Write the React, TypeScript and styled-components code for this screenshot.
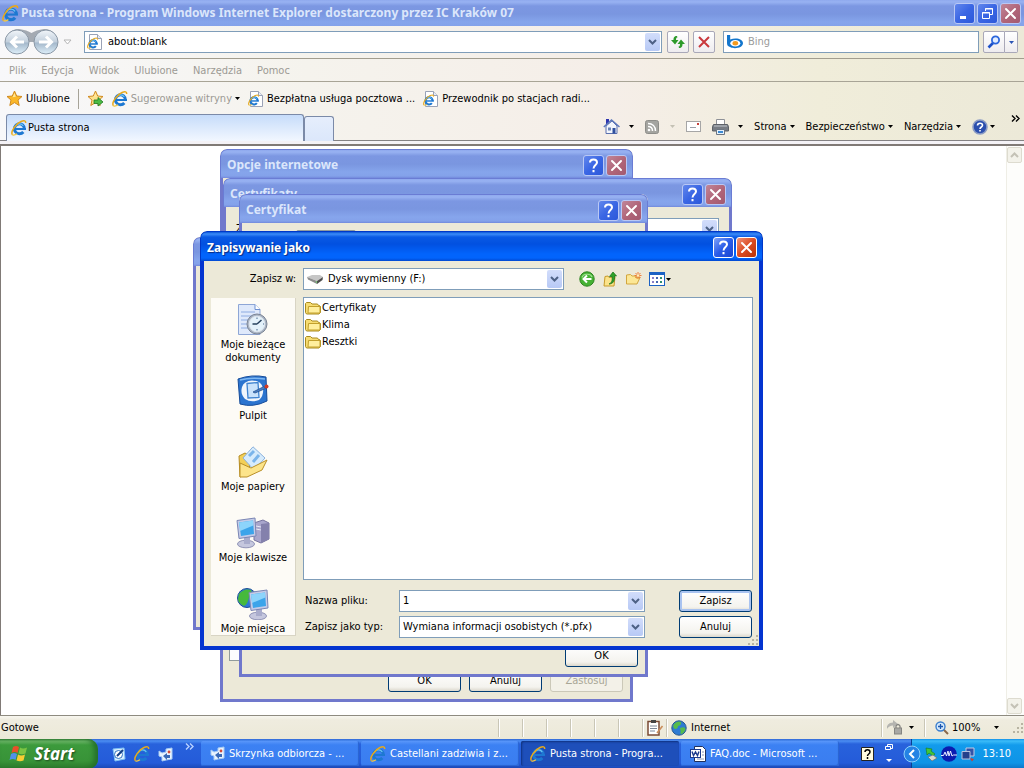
import React from "react";
import styled, { createGlobalStyle, css } from "styled-components";

const ui = `"DejaVu Sans Condensed", "DejaVu Sans", "Liberation Sans", sans-serif`;
const caption = `"Noto Sans", "Open Sans", sans-serif`;

const GlobalStyle = createGlobalStyle`
  * { box-sizing: border-box; }
  body { margin: 0; background: #fff; }
  button, input, select { font: inherit; color: inherit; margin: 0; }
  svg { display: block; flex: none; }
`;

const Screen = styled.div`
  min-height: 100vh;
  display: flex;
  flex-direction: column;
  font: 11px/14px ${ui};
  color: #000;
  overflow: hidden;
`;

const PlainButton = styled.button`
  border: 0;
  padding: 0;
  background: none;
  display: flex;
  align-items: center;
  white-space: nowrap;
`;

/* ---------- window captions ---------- */

const inactiveCaption = `linear-gradient(#8fa9ee 0, #98b2f2 2px, #7c97e2 6px, #7a96e0 14px, #86a5ec 22px, #84a2ea 26px, #7289dc 100%)`;
const activeCaption = `linear-gradient(#0a56d8 0, #3c8cf8 2px, #0a5ae4 5px, #0250e0 12px, #0264fc 22px, #0264fc 26px, #0148d0 100%)`;

const MainCaption = styled.header`
  height: 26px;
  display: flex;
  align-items: center;
  gap: 2px;
  padding: 0 3px 0 2px;
  background: ${inactiveCaption};
`;

const CaptionText = styled.h1<{ $active?: boolean }>`
  flex: 1;
  min-width: 0;
  margin: 0;
  font: bold 12px/16px ${caption};
  color: ${(p) => (p.$active ? "#fff" : "#dbe6fb")};
  text-shadow: ${(p) => (p.$active ? "1px 1px 1px #0a2a80" : "none")};
  white-space: nowrap;
  overflow: hidden;
`;

const CaptionButtons = styled.div`
  display: flex;
  gap: 2px;
`;

const CaptionButton = styled.button<{ $kind: "blue" | "close"; $active?: boolean }>`
  width: 21px;
  height: 21px;
  padding: 0;
  display: flex;
  align-items: center;
  justify-content: center;
  border-radius: 3px;
  border: 1px solid ${(p) => (p.$active ? "#fff" : "#b9c8f5")};
  background: ${(p) =>
    p.$kind === "close"
      ? p.$active
        ? "linear-gradient(135deg, #f0937a, #dc4c22 50%, #b83208)"
        : "linear-gradient(135deg, #c08698, #b06478 55%, #a25a70)"
      : p.$active
        ? "linear-gradient(135deg, #7fa2f8, #2a5ce8 50%, #1a44d0)"
        : "linear-gradient(135deg, #6287ec, #3a66e4 50%, #2c58da)"};
`;

const CloseGlyph = () => (
  <svg width="15" height="15" viewBox="0 0 15 15" stroke="#fff" strokeWidth="2" strokeLinecap="round">
    <path d="M3 3l9 9M12 3l-9 9" />
  </svg>
);
const HelpGlyph = () => (
  <svg width="15" height="17" viewBox="0 0 15 17" fill="none" stroke="#fff" strokeWidth="2">
    <path d="M4 5.500C4 1.500 11 1.500 11 5.500C11 8 7.500 8 7.500 11.500" />
    <path d="M7.500 13v2.200" />
  </svg>
);

/* ---------- icons ---------- */

const IeMark = () => (
  <>
    <path d="M13.400 9.200A5 5 0 1 0 12.300 12" fill="none" stroke="#1d78d2" strokeWidth="3" />
    <path d="M4 9h11" stroke="#1d78d2" strokeWidth="2" />
    <path d="M4.200 7C5.500 3.200 10.500 3 12.300 6" fill="none" stroke="#6cc4f4" strokeWidth="1.200" />
    <path d="M1.500 14.800C-1 12 5 3.500 10 1.500C13 0.300 15 0.600 14.600 3" fill="none" stroke="#e8a91c" strokeWidth="1.500" />
    <path d="M1.500 14.800C3 15.500 5 14.500 6 13.800" fill="none" stroke="#f5c842" strokeWidth="1.300" />
  </>
);
const IeIcon = ({ size = 16 }: { size?: number }) => (
  <svg width={size} height={size} viewBox="0 0 16 16">
    <IeMark />
  </svg>
);
const IePageIcon = () => (
  <svg width="16" height="16" viewBox="0 0 16 16">
    <path d="M2.500 .5h8l4 4v11h-12z" fill="#fff" stroke="#9aa2b6" />
    <path d="M10.500 .5v4h4" fill="#e8ecf6" stroke="#9aa2b6" />
    <g transform="translate(0 3.500) scale(.72)">
      <IeMark />
    </g>
  </svg>
);
const NavCircles = () => (
  <svg width="60" height="28" viewBox="0 0 60 28">
    <defs>
      <linearGradient id="navFill" x1="0" y1="0" x2="0" y2="1">
        <stop offset="0" stopColor="#f2f6fa" />
        <stop offset=".48" stopColor="#c3d0dd" />
        <stop offset=".55" stopColor="#a5b9cc" />
        <stop offset="1" stopColor="#dff0fa" />
      </linearGradient>
    </defs>
    <path d="M5 6Q9 1 16 1Q24 2 28.500 5Q33 2 41 1Q48 1 52 6V14H5z" fill="#a4aab2" />
    <circle cx="14" cy="14" r="12" fill="url(#navFill)" stroke="#8b98a6" />
    <circle cx="43" cy="14" r="12" fill="url(#navFill)" stroke="#8b98a6" />
    <path d="M21 14H9M14 8.500L8.500 14L14 19.500M36 14h12M43 8.500L48.500 14L43 19.500" fill="none" stroke="#fff" strokeWidth="3" />
  </svg>
);
const SmallArrow = ({ color = "#000" }: { color?: string }) => (
  <svg width="5" height="3" viewBox="0 0 5 3">
    <path d="M0 0h5L2.500 3z" fill={color} />
  </svg>
);
const OutlineArrow = () => (
  <svg width="9" height="7" viewBox="0 0 9 7">
    <path d="M1 1h7L4.500 5z" fill="#fff" stroke="#b5b5b5" />
  </svg>
);
const RefreshIcon = () => (
  <svg width="16" height="16" viewBox="0 0 16 16" fill="#2c9a2a">
    <path d="M7 2C4 2 3.500 4 3.500 6H1l4 4.500L8.500 6H6C6 4 6.500 3.500 7.500 3.500z" />
    <path d="M9 14c3 0 3.500-2 3.500-4H15l-4-4.500L7.500 10H10c0 2-.5 2.500-1.500 2.500z" />
  </svg>
);
const StopIcon = () => (
  <svg width="16" height="16" viewBox="0 0 16 16" stroke="#c9383c" strokeWidth="2">
    <path d="M3 3l10 10M13 3L3 13" />
  </svg>
);
const BingIcon = () => (
  <svg width="17" height="16" viewBox="0 0 17 16">
    <path d="M1 1h3.200v4.500C10 3 17 5 17 9.300 17 14 8 15.500 4 13 1.500 12.300 1 11 1 9z" fill="#1376cc" />
    <ellipse cx="9.300" cy="9.300" rx="5" ry="3.200" fill="#fff" />
    <ellipse cx="9.300" cy="9.300" rx="2.800" ry="2.200" fill="#f39a1d" />
  </svg>
);
const SearchIcon = () => (
  <svg width="14" height="14" viewBox="0 0 14 14" fill="none">
    <path d="M6 8L1.500 12.500" stroke="#1c50c8" strokeWidth="2.600" />
    <circle cx="8.500" cy="5" r="3.600" fill="#e2edff" stroke="#2b66dc" strokeWidth="1.800" />
  </svg>
);
const StarIcon = ({ arrow }: { arrow?: boolean }) => (
  <svg width="17" height="17" viewBox="0 0 17 17">
    <path d="M8.500 1l2.200 5 5.300.500-4 3.600 1.200 5.400-4.700-2.900-4.700 2.900L5 10.100 1 6.500 6.300 6z" fill={arrow ? "#fde08a" : "#fbb829"} stroke="#d08a20" />
    <path d="M8.500 3l1.300 3.800-3.300.4z" fill="#ffe79a" />
    {arrow && <path d="M7 10h4V7.500L16 12l-5 4v-2.500H7z" fill="#4cbb45" stroke="#207a22" strokeWidth=".8" />}
  </svg>
);
const HomeIcon = () => (
  <svg width="17" height="17" viewBox="0 0 17 17">
    <path d="M3 1h3v5H3z" fill="#2f35ae" />
    <path d="M3 8l6-5 5 5v7.500H3z" fill="#f2f5fc" stroke="#5a6fae" />
    <path d="M.8 9L8.500 2l8 7" fill="none" stroke="#5d78bb" strokeWidth="1.500" />
    <path d="M9.500 10h3v5.500h-3z" fill="#2f4f9e" />
    <path d="M5 9.500h3v3H5z" fill="#6d84b8" />
  </svg>
);
const RssIcon = () => (
  <svg width="14" height="14" viewBox="0 0 14 14" fill="none" stroke="#fff" strokeWidth="1.500">
    <rect x=".5" y=".5" width="13" height="13" rx="2" fill="#a4a4a0" stroke="#8d8d89" strokeWidth="1" />
    <path d="M3 3.500c4.500 0 7.500 3 7.500 7.500M3 6.500C6 6.500 7.500 8 7.500 11" />
    <circle cx="4" cy="10" r=".6" />
  </svg>
);
const MailIcon = () => (
  <svg width="15" height="11" viewBox="0 0 15 11" fill="none">
    <rect x=".5" y=".5" width="14" height="10" fill="#fff" stroke="#a6a6a6" />
    <path d="M4 6.500h6" stroke="#9aa0aa" />
    <path d="M11 2h2v2h-2z" fill="#c7423d" />
  </svg>
);
const PrintIcon = () => (
  <svg width="17" height="16" viewBox="0 0 17 16">
    <path d="M4.500 .5h8V6h-8z" fill="#fff" stroke="#8e9197" />
    <path d="M1.500 5.500h14l1 2v4.500H.5V7.500z" fill="#777c84" stroke="#5d6167" />
    <path d="M2 7h13" stroke="#c2c6cc" />
    <path d="M4.500 10.500h8v5h-8z" fill="#e7f1fb" stroke="#6d7681" />
    <path d="M6 13h5" stroke="#3c8ad2" strokeWidth="2" />
  </svg>
);
const HelpIcon = () => (
  <svg width="16" height="16" viewBox="0 0 16 16" fill="none">
    <circle cx="8" cy="8" r="7" fill="#2b4fae" stroke="#8c9cc4" strokeWidth="1.600" />
    <path d="M5.500 6.500C5.500 3.500 10.500 3.500 10.500 6.300C10.500 8 8 8 8 10M8 11v1.600" stroke="#fff" strokeWidth="1.600" />
  </svg>
);
const FolderIcon = () => (
  <svg width="16" height="16" viewBox="0 0 16 16">
    <path d="M.5 12.500v-9l1-1h4l1.500 1.500h5.500l1 1.500h1l1 1v6l-1.500 1.500H1.500z" fill="#f6dc72" stroke="#a88a1e" />
    <path d="M3.500 6.500h11.500v6.500H3z" fill="#ffef9e" stroke="#c2a02c" />
  </svg>
);
const DriveIcon = () => (
  <svg width="16" height="12" viewBox="0 0 16 12">
    <path d="M0 4l5-2h8l3 2-6 4z" fill="#c6c6c6" />
    <path d="M0 4l10 4v3L1 6.500z" fill="#8c8c8c" />
    <path d="M16 4l-6 4v3l5.500-4z" fill="#4d4d4d" />
    <circle cx="9.500" cy="9" r=".7" fill="#6ee06a" />
  </svg>
);
const GoBackIcon = () => (
  <svg width="16" height="16" viewBox="0 0 16 16">
    <circle cx="8" cy="8" r="7.200" fill="#46b234" stroke="#2d8320" />
    <path d="M3 6.500C4 2.500 11.500 2 13 6" fill="none" stroke="#9de08e" strokeWidth="1.200" />
    <path d="M12.500 8H5M8 4.500L4.500 8L8 11.500" fill="none" stroke="#fff" strokeWidth="2" />
  </svg>
);
const UpIcon = () => (
  <svg width="16" height="16" viewBox="0 0 16 16">
    <path d="M2 15L3 5.500l3-.5 1 1.500 6-.5-1 9z" fill="#fbe38a" stroke="#c79a2a" />
    <path d="M7 13c3-1 3.500-4 3-7.500H7.500L11 1l3.500 4H12.500c.5 5-1.500 8-5.500 8z" fill="#2fa32b" stroke="#156b15" strokeWidth=".7" />
  </svg>
);
const NewFolderIcon = () => (
  <svg width="17" height="16" viewBox="0 0 17 16">
    <path d="M1.500 13V4l4-.5 1.500 1.500h4v2l4-.5L12 13z" fill="#fce795" stroke="#d2a63e" />
    <path d="M13 1v7M9.500 4.500h7M10.500 2l5 5M15.500 2l-5 5" stroke="#f07028" strokeWidth=".9" />
    <circle cx="13" cy="4.500" r="1.200" fill="#fff3b8" />
  </svg>
);
const ViewsIcon = () => (
  <svg width="16" height="14" viewBox="0 0 16 14">
    <rect x=".5" y=".5" width="15" height="13" fill="#fff" stroke="#1c62c4" />
    <path d="M0 1.500h16" stroke="#1c62c4" strokeWidth="3" />
    <path d="M3 6h2M3 10h2" stroke="#8b7fc8" strokeWidth="2" />
    <path d="M7 6h2M7 10h2" stroke="#4466b0" strokeWidth="2" />
    <path d="M11 6h2M11 10h2" stroke="#2f8f72" strokeWidth="2" />
  </svg>
);
const RecentIcon = () => (
  <svg width="32" height="32" viewBox="0 0 32 32">
    <path d="M1.500 .5H18l5 5v25H1.500z" fill="#dfe9fb" stroke="#8ea6d6" />
    <path d="M18 .5v5h5" fill="#fff" stroke="#6d8fd0" />
    <path d="M4 8h14M4 12h12M4 16h8M4 20h6M4 24h7" stroke="#a9c0ea" strokeWidth="1.500" />
    <circle cx="20" cy="20" r="10" fill="#a9b4c4" stroke="#7b8494" />
    <circle cx="20" cy="20" r="7.800" fill="#e4f2fb" stroke="#dfe6ee" />
    <path d="M20 20l4.500-4M20 20h-4.500" stroke="#26415e" strokeWidth="1.500" />
    <path d="M20 13.500v1.500M20 25v1.500M26 20h1" stroke="#4c6a8e" />
  </svg>
);
const DesktopIcon = () => (
  <svg width="32" height="32" viewBox="0 0 32 32">
    <path d="M1 4Q15-1 29 2L30 26Q16 33 3 29z" fill="#2b74cf" stroke="#164c9a" />
    <path d="M3 5Q14 2 28 4" fill="none" stroke="#7fb8f2" strokeWidth="1.500" />
    <path d="M5 12Q7 6 15 5.500Q24 5.500 26 13Q27 21 22 25Q14 28 8 24Q3 19 5 12z" fill="#f1f6fc" />
    <path d="M10 8.500l11-1 1 15-11 .5z" fill="#c9e2fb" stroke="#3f83d0" strokeWidth="1.300" />
    <path d="M16 17l11-5.500 1.500 2L18 18z" fill="#4a7fc6" stroke="#24508e" strokeWidth=".8" />
    <circle cx="29.500" cy="11.500" r="2" fill="#d23a22" />
  </svg>
);
const DocumentsIcon = () => (
  <svg width="32" height="32" viewBox="0 0 32 32">
    <path d="M2 10l6-3 5 3-1 18L3 31z" fill="#f2cf57" stroke="#b58b22" />
    <path d="M6 12L16 .8 28 12 17 24z" fill="#d6ebfc" stroke="#8cb2dc" />
    <path d="M12 10l5-5M16 16l6-7" stroke="#7ab4ea" strokeWidth="3" />
    <path d="M3 31L3 17l11 5L30 14 25 24 10 31z" fill="#fce48a" stroke="#b98f28" />
  </svg>
);
const Monitor = () => (
  <>
    <ellipse cx="10" cy="27" rx="8.500" ry="3.800" fill="#c5c7de" stroke="#9093b6" />
    <path d="M8 19h6v8H8z" fill="#a9accc" />
    <path d="M1 3.500L19 1l1 18L3 21.500z" fill="#c4cbe8" stroke="#7b86b4" />
    <path d="M3 5.500L17 3.500l1 13.500L5 19z" fill="#3ca4ea" />
    <path d="M3 5.500L17 3.500l.3 5L4 14z" fill="#8dd4fb" />
  </>
);
const ComputerIcon = () => (
  <svg width="34" height="32" viewBox="0 0 34 32">
    <path d="M18 6l9-3 6 3v16l-8 4-7-3z" fill="#a9a6cc" stroke="#77749e" />
    <path d="M25 7l8-1v16l-8 4z" fill="#8481ac" />
    <path d="M20 9l5 1M20 12l5 1" stroke="#e9e9f6" />
    <Monitor />
  </svg>
);
const NetworkIcon = () => (
  <svg width="32" height="32" viewBox="0 0 32 32">
    <circle cx="10" cy="10" r="9.500" fill="#2c76d6" stroke="#1c4d96" />
    <path d="M2 6Q7 0 14 2Q17 7 12 9Q11 16 7 18Q1 15 1 11z" fill="#46b93c" />
    <g transform="translate(11 1)">
      <Monitor />
    </g>
  </svg>
);
const FlagIcon = () => (
  <svg width="20" height="20" viewBox="0 0 20 20">
    <path d="M4 3Q7 1 10 3L8.500 9Q6 7 2.500 9z" fill="#e8502a" />
    <path d="M11 3.500Q14 5.500 18 3.500L16.500 9.500Q13 11 9.500 9.500z" fill="#7cc443" />
    <path d="M2 10Q5 8 8 10L6.500 16Q4 14 .5 16z" fill="#5191ea" />
    <path d="M9 10.500Q12 12.500 16 10.500L14.500 16.500Q11 18 7.500 16.500z" fill="#f8cd33" />
  </svg>
);
const DesktopQuickIcon = () => (
  <svg width="15" height="15" viewBox="0 0 15 15" fill="none">
    <path d="M2 2l11-1 1 11-10 2z" fill="#d9efff" stroke="#7fc0f4" />
    <circle cx="7.500" cy="7.500" r="4" fill="#fff" stroke="#2c72c2" />
    <path d="M6 9l6-6" stroke="#123e85" strokeWidth="2" />
  </svg>
);
const OutlookIcon = () => (
  <svg width="15" height="15" viewBox="0 0 15 15">
    <path d="M1 4l3 2 4-1V2l6-1v11l-6 1-4 1v-4L1 9z" fill="#e9f4ff" stroke="#a9ccf2" />
    <path d="M5 9l4-3v2h3v3H9v2z" fill="#3a6ab8" />
    <circle cx="11" cy="5" r="1.400" fill="#d24a3a" />
  </svg>
);
const WordIcon = () => (
  <svg width="16" height="16" viewBox="0 0 16 16" fill="none">
    <path d="M4.500 .5h8l3 3v12h-11z" fill="#fff" stroke="#20305c" />
    <path d="M12 6h2M12 9h2M7 13h7" stroke="#8894b8" />
    <rect x=".5" y="3.500" width="10" height="8" fill="#fff" stroke="#1c3a8c" />
    <path d="M2 5.500l1.500 4L5.500 6l2 3.500L9 5.500" stroke="#1c3a8c" strokeWidth="1.400" />
  </svg>
);
const NoteIcon = () => (
  <svg width="17" height="16" viewBox="0 0 17 16" fill="none">
    <rect x="1" y="1.500" width="11" height="13.500" fill="#fff" stroke="#7a4a34" strokeWidth="1.500" />
    <path d="M4 1.500h5" stroke="#444" strokeWidth="3" />
    <path d="M3 6h7M3 8.500h7M3 11h5" stroke="#7d8798" />
    <path d="M10 13l5.500-7" stroke="#c98d5a" strokeWidth="1.600" />
  </svg>
);
const GlobeIcon = () => (
  <svg width="16" height="16" viewBox="0 0 16 16">
    <circle cx="8" cy="8" r="7.200" fill="#2e7bd2" stroke="#28598f" />
    <path d="M3 4Q7 .5 10 2Q11 5 7 6Q7 9 4 9Q1 7 3 4z" fill="#57bb4b" />
    <path d="M9 8Q14 6 14.500 9Q13 14 9.500 14Q10 11 9 8z" fill="#57bb4b" />
  </svg>
);
const ProtectIcon = () => (
  <svg width="17" height="15" viewBox="0 0 17 15" fill="none">
    <path d="M1 9Q0 3 7 2.500V0l5 4-5 4V5.500Q3 5.500 1 9z" fill="#b4b4b0" />
    <rect x="8.500" y="8" width="7" height="6" fill="#a8a8a4" stroke="#858581" />
    <path d="M10 8V6q2-3 4 0v2" stroke="#858581" strokeWidth="1.300" />
  </svg>
);
const ZoomIcon = () => (
  <svg width="14" height="14" viewBox="0 0 14 14" fill="none">
    <path d="M8 8l5 5" stroke="#8b6a4a" strokeWidth="2" />
    <circle cx="5.500" cy="5.500" r="4.500" fill="#d6eafc" stroke="#3b7fce" strokeWidth="1.400" />
    <path d="M5.500 3v5M3 5.500h5" stroke="#1b57b0" strokeWidth="1.300" />
  </svg>
);
const GripIcon = () => (
  <svg width="12" height="12" viewBox="0 0 12 12" fill="#b8b4a2">
    <path d="M9 1h2v2H9zM9 5h2v2H9zM5 5h2v2H5zM9 9h2v2H9zM5 9h2v2H5zM1 9h2v2H1z" />
  </svg>
);
const ChevronIcon = ({ color = "#4d6185" }: { color?: string }) => (
  <svg width="9" height="6" viewBox="0 0 9 6" fill="none" stroke={color} strokeWidth="2">
    <path d="M1 1l3.500 3.500L8 1" />
  </svg>
);
const DoubleChevron = ({ color }: { color: string }) => (
  <svg width="9" height="7" viewBox="0 0 9 7" fill="none" stroke={color} strokeWidth="1.400">
    <path d="M1 .5l3 3-3 3M5 .5l3 3-3 3" />
  </svg>
);

/* ---------- browser chrome ---------- */

const chromeGradient = `linear-gradient(90deg, #f8f8fa 0, #f5f3ed 30%, #f5eee8 60%, #f0edda 80%, #ece9d8 100%)`;

const NavBar = styled.div`
  height: 33px;
  display: flex;
  align-items: center;
  padding: 0 6px 0 3px;
  background: ${chromeGradient};
  border-bottom: 1px solid #a29d8e;
`;

const NavHistory = styled(PlainButton)`
  margin-right: 12px;
`;

const FieldBox = styled.label<{ $grow: number }>`
  flex: ${(p) => p.$grow} 1 0;
  min-width: 0;
  height: 22px;
  display: flex;
  align-items: center;
  gap: 5px;
  padding: 0 1px 0 2px;
  background: #fff;
  border: 1px solid #7f9db9;
`;

const FieldInput = styled.input`
  flex: 1;
  min-width: 0;
  border: 0;
  padding: 0;
  outline: 0;
  background: none;
  &::placeholder { color: #9b9b9b; opacity: 1; }
`;

const DropArrow = styled.span`
  flex: none;
  width: 15px;
  height: 18px;
  display: flex;
  align-items: center;
  justify-content: center;
  border-radius: 2px;
  background: linear-gradient(#d2ddfb, #b7c9f5);
`;

const NavTools = styled.div`
  display: flex;
  gap: 4px;
  margin: 0 8px 0 5px;
`;

const SquareButton = styled.button`
  width: 22px;
  height: 22px;
  padding: 0;
  display: flex;
  align-items: center;
  justify-content: center;
  border: 1px solid #a9a8b8;
  border-radius: 2px;
  background: linear-gradient(#fff, #eeecef);
`;

const SearchButtons = styled.div`
  display: flex;
  margin-left: 4px;
  & > :first-child { border-radius: 2px 0 0 2px; }
  & > :last-child { width: 13px; border-left: 0; border-radius: 0 2px 2px 0; }
`;

const MenuBar = styled.nav`
  height: 23px;
  display: flex;
  align-items: center;
  gap: 15px;
  padding: 2px 9px 0;
  color: #9c9a94;
  background: ${chromeGradient};
  border-bottom: 1px solid #a8a496;
`;

const FavoritesBar = styled.div`
  height: 31px;
  display: flex;
  align-items: center;
  gap: 8px;
  padding: 2px 6px 0;
  background: ${chromeGradient};
`;

const FavButton = styled(PlainButton)<{ $muted?: boolean }>`
  gap: 3px;
  color: ${(p) => (p.$muted ? "#9c9a94" : "#000")};
`;

const Separator = styled.span`
  width: 1px;
  height: 20px;
  background: #a6a398;
`;

const TabRow = styled.div`
  height: 33px;
  display: flex;
  align-items: flex-start;
  padding: 1px 4px 0 6px;
  background:
    linear-gradient(transparent 27px, #848284 27px, #848284 28px, #f4f2f6 28px, #f4f2f6 31px, #807a76 31px),
    ${chromeGradient};
`;

const Tab = styled.button`
  width: 298px;
  height: 27px;
  display: flex;
  align-items: center;
  gap: 1px;
  padding: 0 4px;
  border: 1px solid #7b8aa8;
  border-bottom: 0;
  border-radius: 3px 3px 0 0;
  background: linear-gradient(#c6dcfa, #f2f7ff);
`;

const NewTab = styled.button`
  width: 30px;
  height: 25px;
  margin: 2px auto 0 0;
  border: 1px solid #7b8aa8;
  border-bottom: 0;
  border-radius: 3px 3px 0 0;
  background: linear-gradient(#e6eefc, #dbe7fb);
`;

const CommandBar = styled.div`
  height: 25px;
  display: flex;
  align-items: center;
  gap: 11px;
`;

const Command = styled(PlainButton)<{ $gap: number }>`
  gap: ${(p) => p.$gap}px;
`;

const MoreButton = styled(PlainButton)`
  align-self: flex-start;
  margin: 1px 0 0 5px;
`;

const Page = styled.main`
  flex: 1;
  min-height: 569px;
  position: relative;
  display: flex;
  justify-content: flex-end;
  background: #fff;
  border-left: 1px solid #807a76;
`;

const ScrollTrack = styled.div`
  width: 18px;
  display: flex;
  flex-direction: column;
  justify-content: space-between;
  padding: 1px 2px 1px 0;
  background: #fdfdfb;
  border-left: 1px solid #efeee6;
`;

const ScrollButton = styled.button<{ $up?: boolean }>`
  width: 15px;
  height: 16px;
  padding: 0;
  display: flex;
  align-items: center;
  justify-content: center;
  border: 1px solid #dddbcf;
  border-radius: 2px;
  background: #f3f2ea;
  svg { transform: ${(p) => (p.$up ? "rotate(180deg)" : "none")}; }
`;

const StatusBar = styled.footer`
  height: 24px;
  display: flex;
  align-items: center;
  padding: 1px 0 0 1px;
  background: linear-gradient(#8e8b80 0, #8e8b80 1px, #f8f7f0 1px, #efecdf 5px, #ece9d8);
`;

const StatusText = styled.span`
  flex: 1;
`;

const StatusCell = styled.div<{ $w: number; $spread?: boolean }>`
  width: ${(p) => p.$w}px;
  height: 18px;
  display: flex;
  align-items: center;
  justify-content: ${(p) => (p.$spread ? "space-between" : "flex-start")};
  gap: 4px;
  padding-left: ${(p) => (p.$spread ? 10 : 4)}px;
  white-space: nowrap;
  border-left: 1px solid #c9c6b6;
  box-shadow: inset 1px 0 #fff;
`;

/* ---------- taskbar ---------- */

const Taskbar = styled.div`
  height: 30px;
  display: flex;
  align-items: stretch;
  color: #fff;
  background: linear-gradient(#3168d5 0, #4b8df2 2px, #2862dc 5px, #245bd9 24px, #1b45b0);
`;

const StartButton = styled.button`
  width: 98px;
  border: 0;
  padding: 0 0 0 9px;
  display: flex;
  align-items: center;
  gap: 5px;
  color: #fff;
  font: italic bold 17px/20px "Open Sans", "Noto Sans", sans-serif;
  text-shadow: 1px 1px 2px #1d4a1d;
  border-radius: 0 10px 10px 0;
  background: linear-gradient(#3b8a3c 0, #70bb6c 2px, #3c9a3c 6px, #389338 22px, #2b7a2c);
  box-shadow: inset -4px 0 5px #25702a;
`;

const QuickLaunch = styled.div`
  width: 103px;
  display: flex;
  align-items: center;
  gap: 8px;
  padding-left: 13px;
`;

const QuickMore = styled(PlainButton)`
  align-self: flex-start;
  margin: 4px 0 0 4px;
`;

const TaskButton = styled.button<{ $active?: boolean }>`
  flex: 0 1 158px;
  min-width: 0;
  height: 25px;
  margin: 2px 2px 0 0;
  padding: 0 9px;
  display: flex;
  align-items: center;
  gap: 4px;
  border: 0;
  border-radius: 2px;
  white-space: nowrap;
  color: #fff;
  background: ${(p) => (p.$active ? "#1e4fba" : "linear-gradient(#5a97fa, #3c81f3 4px, #3a7df0)")};
  box-shadow: ${(p) => (p.$active ? "inset 1px 1px 2px #10327e" : "inset -1px -1px 1px #2a63d0")};
`;

const LangBar = styled.div`
  flex: 1;
  display: flex;
  align-items: center;
  justify-content: flex-end;
  gap: 10px;
  padding-right: 17px;
`;

const Tray = styled.div`
  flex: none;
  display: flex;
  align-items: center;
  gap: 4px;
  padding-right: 13px;
  background: linear-gradient(#1290e8 0, #3bbcf8 2px, #129bec 6px, #0f94e6 24px, #0c72c4);
  border-left: 1px solid #0a3f90;
`;

const TrayToggle = styled(PlainButton)`
  margin-left: -9px;
`;

const Clock = styled.time`
  margin-left: 3px;
`;

/* ---------- dialogs ---------- */

const DialogFrame = styled.section<{ $x: number; $y: number; $w: number; $h?: number }>`
  position: absolute;
  left: ${(p) => p.$x}px;
  top: ${(p) => p.$y}px;
  width: ${(p) => p.$w}px;
  ${(p) => p.$h && css`height: ${p.$h}px;`}
  display: flex;
  flex-direction: column;
  border-radius: 7px 7px 0 0;
  overflow: hidden;
  background: #ece9d8;
`;

const DialogCaption = styled.header<{ $active?: boolean }>`
  flex: none;
  height: ${(p) => (p.$active ? 30 : 29)}px;
  display: flex;
  align-items: center;
  padding: 2px 5px 0 6px;
  border: solid ${(p) => (p.$active ? "#0038c8" : "#6a7cd4")};
  border-width: 1px 1px 0;
  border-radius: 7px 7px 0 0;
  background: ${(p) => (p.$active ? activeCaption : inactiveCaption)};
`;

const DialogBody = styled.div<{ $active?: boolean }>`
  flex: 1;
  min-height: 0;
  display: flex;
  flex-direction: column;
  border: solid ${(p) => (p.$active ? "#0434d0" : "#7078cc")};
  border-width: ${(p) => (p.$active ? "0 4px 4px" : "0 3px 3px")};
`;

type DialogProps = {
  title?: string;
  x: number;
  y: number;
  w: number;
  h?: number;
  active?: boolean;
  children?: React.ReactNode;
};

const Dialog = ({ title, x, y, w, h, active, children }: DialogProps) => (
  <DialogFrame $x={x} $y={y} $w={w} $h={h}>
    <DialogCaption $active={active}>
      <CaptionText as="h2" $active={active}>{title}</CaptionText>
      {title && (
        <CaptionButtons>
          <CaptionButton $kind="blue" $active={active} aria-label="Pomoc"><HelpGlyph /></CaptionButton>
          <CaptionButton $kind="close" $active={active} aria-label="Zamknij"><CloseGlyph /></CaptionButton>
        </CaptionButtons>
      )}
    </DialogCaption>
    <DialogBody $active={active}>{children}</DialogBody>
  </DialogFrame>
);

const PushButton = styled.button<{ $primary?: boolean }>`
  width: 73px;
  height: 22px;
  padding: 0;
  border: 1px solid #003c74;
  border-radius: 3px;
  background: linear-gradient(#fff, #f4f3ee 80%, #dcd8cc);
  box-shadow: ${(p) => (p.$primary ? "inset 0 0 0 2px #a9c3f0" : "none")};
  &:disabled {
    color: #a8a696;
    border-color: #cbc8b8;
    background: #f3f1e8;
  }
`;

const ButtonRow = styled.div`
  display: flex;
  justify-content: flex-end;
  gap: 8px;
  margin-top: auto;
  padding: 0 7px;
  margin-bottom: 7px;
`;

const TabPanel = styled.div`
  height: 454px;
  margin: 29px 6px 0;
  border: 1px solid #919b9c;
  background: #fcfcfe;
`;

const PurposeRow = styled.div`
  display: flex;
  align-items: center;
  gap: 8px;
  padding: 11px 10px 0;
`;

const SheetTab = styled.div`
  width: 60px;
  height: 20px;
  margin: 7px 0 0 54px;
  border: 1px solid #919b9c;
  border-radius: 2px 2px 0 0;
`;

const Combo = styled.div<{ $w?: number }>`
  ${(p) => (p.$w ? css`width: ${p.$w}px;` : css`flex: 1;`)}
  min-width: 0;
  height: 22px;
  display: flex;
  align-items: center;
  gap: 5px;
  padding: 0 1px 0 3px;
  background: #fff;
  border: 1px solid #7f9db9;
`;

const ComboSelect = styled.select`
  flex: 1;
  min-width: 0;
  padding: 0;
  border: 0;
  outline: 0;
  appearance: none;
  background: none;
`;

const SaveLayout = styled.div`
  padding: 7px 6px 7px 7px;
  display: flex;
  flex-direction: column;
  gap: 7px;
`;

const LookInRow = styled.div`
  display: flex;
  align-items: center;
`;

const LookInLabel = styled.label`
  width: 92px;
  padding-right: 7px;
  text-align: right;
`;

const LookInTools = styled.div`
  display: flex;
  align-items: center;
  gap: 7px;
  margin-left: 15px;
`;

const SaveMain = styled.div`
  display: flex;
  gap: 7px;
`;

const Places = styled.nav`
  width: 85px;
  margin: 1px 0 3px;
  padding-top: 6px;
  background: #fdfbf6;
  border: solid #d8d4c4;
  border-width: 0 1px 1px 0;
`;

const Place = styled.button`
  width: 100%;
  height: 71px;
  padding: 0;
  border: 0;
  background: none;
  display: flex;
  flex-direction: column;
  align-items: center;
  gap: 2px;
  line-height: 13px;
  &:last-child { height: 47px; }
`;

const SaveFields = styled.div`
  flex: 1;
  min-width: 0;
  display: flex;
  flex-direction: column;
`;

const FileList = styled.ul`
  height: 283px;
  margin: 0 0 10px;
  padding: 1px;
  list-style: none;
  background: #fff;
  border: 1px solid #7f9db9;
`;

const FileItem = styled.li`
  height: 17px;
  display: flex;
  align-items: center;
  gap: 1px;
`;

const FormRow = styled.div`
  display: flex;
  align-items: center;
  padding: 0 1px 0 2px;
  & + & { margin-top: 4px; }
`;

const FormLabel = styled.label`
  width: 94px;
`;

const FormAction = styled.div`
  margin-left: 34px;
`;

const Grip = styled.div`
  position: absolute;
  right: 4px;
  bottom: 4px;
`;

const places: { label: React.ReactNode; icon: React.ReactNode }[] = [
  { label: <>Moje bieżące<br />dokumenty</>, icon: <RecentIcon /> },
  { label: "Pulpit", icon: <DesktopIcon /> },
  { label: "Moje papiery", icon: <DocumentsIcon /> },
  { label: "Moje klawisze", icon: <ComputerIcon /> },
  { label: "Moje miejsca", icon: <NetworkIcon /> },
];

const SaveDialog = () => (
  <Dialog title="Zapisywanie jako" x={199} y={85} w={563} active>
    <SaveLayout>
      <LookInRow>
        <LookInLabel htmlFor="lookin">Zapisz w:</LookInLabel>
        <Combo $w={261}>
          <DriveIcon />
          <ComboSelect id="lookin"><option>Dysk wymienny (F:)</option></ComboSelect>
          <DropArrow><ChevronIcon /></DropArrow>
        </Combo>
        <LookInTools>
          <PlainButton aria-label="Wstecz"><GoBackIcon /></PlainButton>
          <PlainButton aria-label="W górę"><UpIcon /></PlainButton>
          <PlainButton aria-label="Nowy folder"><NewFolderIcon /></PlainButton>
          <Command $gap={1} aria-label="Widok"><ViewsIcon /><SmallArrow /></Command>
        </LookInTools>
      </LookInRow>
      <SaveMain>
        <Places>
          {places.map((p, i) => (
            <Place key={i}>{p.icon}<span>{p.label}</span></Place>
          ))}
        </Places>
        <SaveFields>
          <FileList>
            {["Certyfikaty", "Klima", "Resztki"].map((name) => (
              <FileItem key={name}><FolderIcon />{name}</FileItem>
            ))}
          </FileList>
          <FormRow>
            <FormLabel htmlFor="filename">Nazwa pliku:</FormLabel>
            <Combo>
              <FieldInput id="filename" defaultValue="1" />
              <DropArrow><ChevronIcon /></DropArrow>
            </Combo>
            <FormAction><PushButton $primary>Zapisz</PushButton></FormAction>
          </FormRow>
          <FormRow>
            <FormLabel htmlFor="filetype">Zapisz jako typ:</FormLabel>
            <Combo>
              <ComboSelect id="filetype"><option>Wymiana informacji osobistych (*.pfx)</option></ComboSelect>
              <DropArrow><ChevronIcon /></DropArrow>
            </Combo>
            <FormAction><PushButton>Anuluj</PushButton></FormAction>
          </FormRow>
        </SaveFields>
      </SaveMain>
    </SaveLayout>
    <Grip><GripIcon /></Grip>
  </Dialog>
);

export default function App() {
  return (
    <Screen>
      <GlobalStyle />
      <MainCaption>
        <IeIcon size={17} />
        <CaptionText>Pusta strona - Program Windows Internet Explorer dostarczony przez IC Kraków 07</CaptionText>
        <CaptionButtons>
          <CaptionButton $kind="blue" aria-label="Minimalizuj">
            <svg width="15" height="15" viewBox="0 0 15 15"><path d="M3 10h6v3H3z" fill="#fff" /></svg>
          </CaptionButton>
          <CaptionButton $kind="blue" aria-label="Przywróć">
            <svg width="15" height="15" viewBox="0 0 15 15" fill="none" stroke="#fff">
              <path d="M5.500 5V2.500h7v6H10M5 3h8M2.500 6.500h7v6h-7zM2 7h8" />
            </svg>
          </CaptionButton>
          <CaptionButton $kind="close" aria-label="Zamknij"><CloseGlyph /></CaptionButton>
        </CaptionButtons>
      </MainCaption>

      <NavBar>
        <NavHistory aria-label="Wstecz i dalej"><NavCircles /><OutlineArrow /></NavHistory>
        <FieldBox $grow={580}>
          <IePageIcon />
          <FieldInput aria-label="Adres" defaultValue="about:blank" />
          <DropArrow><ChevronIcon /></DropArrow>
        </FieldBox>
        <NavTools>
          <SquareButton aria-label="Odśwież"><RefreshIcon /></SquareButton>
          <SquareButton aria-label="Zatrzymaj"><StopIcon /></SquareButton>
        </NavTools>
        <FieldBox $grow={254}>
          <BingIcon />
          <FieldInput aria-label="Szukaj" placeholder="Bing" />
        </FieldBox>
        <SearchButtons>
          <SquareButton aria-label="Wyszukaj"><SearchIcon /></SquareButton>
          <SquareButton aria-label="Opcje wyszukiwania"><SmallArrow color="#2b55b4" /></SquareButton>
        </SearchButtons>
      </NavBar>

      <MenuBar>
        {["Plik", "Edycja", "Widok", "Ulubione", "Narzędzia", "Pomoc"].map((m) => (
          <PlainButton key={m}>{m}</PlainButton>
        ))}
      </MenuBar>

      <FavoritesBar>
        <FavButton><StarIcon />Ulubione</FavButton>
        <Separator />
        <FavButton aria-label="Dodaj do ulubionych"><StarIcon arrow /></FavButton>
        <FavButton $muted><IeIcon />Sugerowane witryny <SmallArrow /></FavButton>
        <FavButton><IePageIcon />Bezpłatna usługa pocztowa ...</FavButton>
        <FavButton><IePageIcon />Przewodnik po stacjach radi...</FavButton>
      </FavoritesBar>

      <TabRow>
        <Tab><IeIcon />Pusta strona</Tab>
        <NewTab aria-label="Nowa karta" />
        <CommandBar>
          <Command $gap={9} aria-label="Strona główna"><HomeIcon /><SmallArrow /></Command>
          <Command $gap={11} aria-label="Kanały"><RssIcon /><SmallArrow color="#c4c1b4" /></Command>
          <Command $gap={0} aria-label="Poczta"><MailIcon /></Command>
          <Command $gap={9} aria-label="Drukuj"><PrintIcon /><SmallArrow /></Command>
          <Command $gap={3}>Strona<SmallArrow /></Command>
          <Command $gap={3}>Bezpieczeństwo<SmallArrow /></Command>
          <Command $gap={3}>Narzędzia<SmallArrow /></Command>
          <Command $gap={2} aria-label="Pomoc"><HelpIcon /><SmallArrow /></Command>
          <MoreButton aria-label="Więcej"><DoubleChevron color="#000" /></MoreButton>
        </CommandBar>
      </TabRow>

      <Page>
        <ScrollTrack>
          <ScrollButton $up aria-label="W górę"><ChevronIcon color="#c4c2b6" /></ScrollButton>
          <ScrollButton aria-label="W dół"><ChevronIcon color="#c4c2b6" /></ScrollButton>
        </ScrollTrack>

        <Dialog title="Opcje internetowe" x={219} y={3} w={413} h={553}>
          <TabPanel />
          <ButtonRow>
            <PushButton>OK</PushButton>
            <PushButton>Anuluj</PushButton>
            <PushButton disabled>Zastosuj</PushButton>
          </ButtonRow>
        </Dialog>
        <Dialog title="Certyfikaty" x={222} y={32} w={509} h={440}>
          <PurposeRow>
            <label htmlFor="purpose">Zamierzony cel:</label>
            <Combo>
              <ComboSelect id="purpose" />
              <DropArrow><ChevronIcon /></DropArrow>
            </Combo>
          </PurposeRow>
        </Dialog>
        <Dialog title="Certyfikat" x={238} y={48} w={409} h={483}>
          <SheetTab />
          <ButtonRow><PushButton>OK</PushButton></ButtonRow>
        </Dialog>
        <Dialog x={192} y={91} w={540} h={393} />
        <SaveDialog />
      </Page>

      <StatusBar>
        <StatusText>Gotowe</StatusText>
        {[0, 1, 2, 3, 4, 5].map((n) => <StatusCell key={n} $w={24} />)}
        <StatusCell $w={24}><NoteIcon /></StatusCell>
        <StatusCell $w={215}><GlobeIcon />Internet</StatusCell>
        <StatusCell $w={43}><Command $gap={6} aria-label="Tryb chroniony"><ProtectIcon /><SmallArrow /></Command></StatusCell>
        <StatusCell $w={100} $spread>
          <FavButton aria-label="Powiększenie"><ZoomIcon />100%</FavButton>
          <SmallArrow />
          <GripIcon />
        </StatusCell>
      </StatusBar>

      <Taskbar>
        <StartButton><FlagIcon />Start</StartButton>
        <QuickLaunch>
          <PlainButton aria-label="Pokaż pulpit"><DesktopQuickIcon /></PlainButton>
          <PlainButton aria-label="Internet Explorer"><IeIcon /></PlainButton>
          <PlainButton aria-label="Outlook"><OutlookIcon /></PlainButton>
          <QuickMore aria-label="Więcej"><DoubleChevron color="#b9d2ff" /></QuickMore>
        </QuickLaunch>
        <TaskButton><OutlookIcon />Skrzynka odbiorcza - ...</TaskButton>
        <TaskButton><IeIcon />Castellani zadziwia i z...</TaskButton>
        <TaskButton $active><IeIcon />Pusta strona - Progra...</TaskButton>
        <TaskButton><WordIcon />FAQ.doc - Microsoft ...</TaskButton>
        <LangBar>
          <svg width="13" height="14" viewBox="0 0 13 14" fill="none">
            <path d="M.5 .5h12v13H.5z" fill="#fffce0" stroke="#222" />
            <path d="M4 5C4 2 9 2 9 5C9 7 6.500 7 6.500 9M6.500 10v2" stroke="#000" strokeWidth="1.500" />
          </svg>
          <svg width="10" height="20" viewBox="0 0 10 20" fill="none" stroke="#fff">
            <path d="M3.500 3V.5h5v4H6M1.500 2.500h5v3h-5z" />
            <path d="M2 15h6l-3 3z" fill="#fff" stroke="none" />
          </svg>
        </LangBar>
        <Tray>
          <TrayToggle aria-label="Pokaż ukryte ikony">
            <svg width="18" height="18" viewBox="0 0 18 18" fill="none">
              <circle cx="9" cy="9" r="8" fill="#2483e4" stroke="#8fd0fa" />
              <path d="M11 5L7 9l4 4" stroke="#fff" strokeWidth="2" />
            </svg>
          </TrayToggle>
          <svg width="12" height="15" viewBox="0 0 12 15">
            <path d="M1 1l6 1-1 2 4 3-2 2-4-3-2 2z" fill="#42c63a" stroke="#177a18" strokeWidth=".6" />
            <path d="M3 10l5-2 4 3-5 3z" fill="#d8d8d0" stroke="#666" strokeWidth=".6" />
          </svg>
          <svg width="16" height="16" viewBox="0 0 16 16" fill="none">
            <circle cx="8" cy="8" r="7.800" fill="#0b1cb0" />
            <path d="M0 9.500h2.500L4 6l1.500 4L7 5l1 5 1.500-5L11 10l1.500-1H16" stroke="#e6ecff" />
          </svg>
          <svg width="14" height="15" viewBox="0 0 14 15">
            <path d="M5 1h8v8H5z" fill="#3453a8" stroke="#c1cbe4" />
            <path d="M1 4.500h8V12H1z" fill="#24408c" stroke="#b7c2de" />
            <path d="M9 11l4 1-2 2.500z" fill="#d23b2c" />
          </svg>
          <Clock>13:10</Clock>
        </Tray>
      </Taskbar>
    </Screen>
  );
}
